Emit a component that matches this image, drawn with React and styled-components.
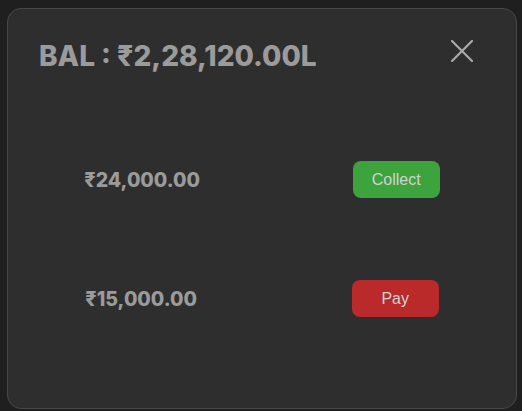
import React from 'react';
import styled, { createGlobalStyle } from 'styled-components';

const GlobalStyle = createGlobalStyle`
  html, body {
    margin: 0;
    padding: 0;
    background: #1f1f1f;
  }
`;

// 弹窗卡片
const Card = styled.div`
  box-sizing: border-box;
  width: 510px;
  height: 401px;
  margin: 8px 0 0 7px;
  background: #2e2e2e;
  border: 1px solid #484848;
  border-radius: 14px;
  display: flex;
  flex-direction: column;
`;

const Header = styled.div`
  display: flex;
  align-items: center;
  justify-content: space-between;
  padding: 25px 43px 0 31px;
  height: 44px;
`;

const Title = styled.h2`
  margin: 0;
  font-family: Inter, "Noto Sans", sans-serif;
  font-weight: 800;
  font-size: 28px;
  color: #9b9b9b;
`;

const CloseButton = styled.button`
  background: none;
  border: none;
  padding: 0;
  margin-bottom: 10px;
  width: 22px;
  height: 22px;
  cursor: pointer;
  display: flex;
  align-items: center;
  justify-content: center;
`;

const Rows = styled.div`
  display: flex;
  flex-direction: column;
  gap: 82px;
  margin-top: 83px;
`;

const Row = styled.div`
  display: flex;
  align-items: center;
  justify-content: space-around;
  height: 37px;
`;

const Amount = styled.span`
  font-family: Inter, "Noto Sans", sans-serif;
  font-weight: 800;
  font-size: 19.5px;
  color: #9b9b9b;
`;

const ActionButton = styled.button`
  width: 87px;
  height: 37px;
  border: none;
  border-radius: 8px;
  background: ${(p) => (p.$variant === 'pay' ? '#bb2a2a' : '#3da33d')};
  color: #d2d2d2;
  font-family: "Liberation Sans", Arial, sans-serif;
  font-size: 16px;
  cursor: pointer;
`;

const transactions = [
  { amount: '₹24,000.00', label: 'Collect', variant: 'collect' },
  { amount: '₹15,000.00', label: 'Pay', variant: 'pay' },
];

const App = () => (
  <>
    <GlobalStyle />
    <Card>
      <Header>
        <Title>BAL : ₹2,28,120.00L</Title>
        <CloseButton aria-label="close">
          <svg width="22" height="22" viewBox="0 0 22 22">
            <path d="M1 1L21 21M21 1L1 21" stroke="#a9a9a9" strokeWidth="2.2" strokeLinecap="square" />
          </svg>
        </CloseButton>
      </Header>
      <Rows>
        {transactions.map((t) => (
          <Row key={t.label}>
            <Amount>{t.amount}</Amount>
            <ActionButton $variant={t.variant}>{t.label}</ActionButton>
          </Row>
        ))}
      </Rows>
    </Card>
  </>
);

export default App;
